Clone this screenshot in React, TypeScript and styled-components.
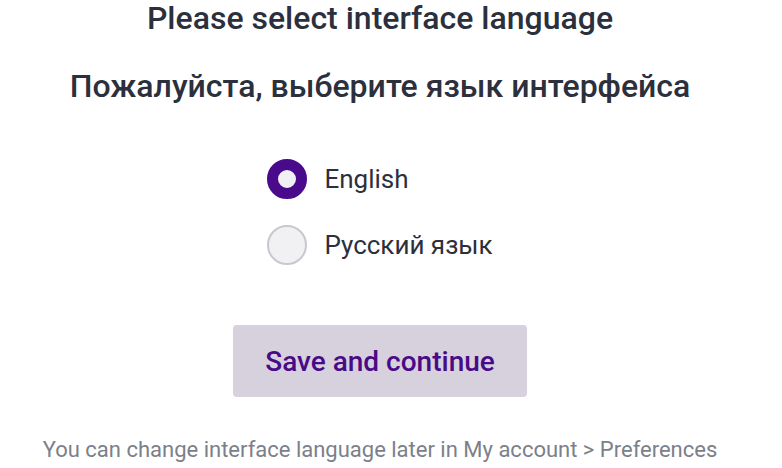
import React, { useState } from "react"
import styled, { createGlobalStyle } from "styled-components"

const GlobalStyle = createGlobalStyle`
    body {
        margin: 0;
        background: #ffffff;
        font-family: Roboto, "Noto Sans", Arial, sans-serif;
    }
`;

const Page = styled.div`
    width: 760px;
    display: flex;
    flex-direction: column;
    align-items: center;
`;

const Titulo = styled.h1<{ $separado?: boolean }>`
    margin: ${(p) => (p.$separado ? "32px 0 0" : "0")};
    font-size: 32px;
    font-weight: 500;
    line-height: 36px;
    color: #2c2f3c;
    text-align: center;
`;

const Lista = styled.div`
    display: flex;
    flex-direction: column;
    gap: 26px;
    margin-top: 55px;
`;

const Opcion = styled.label`
    display: flex;
    align-items: center;
    gap: 17px;
    font-size: 26px;
    color: #2c2f3c;
    cursor: pointer;
`;

const Circulo = styled.span<{ $activo: boolean }>`
    box-sizing: border-box;
    width: 40px;
    height: 40px;
    border-radius: 50%;
    background: #f1f1f4;
    border: ${(p) => (p.$activo ? "11.5px solid #4a0a8c" : "2px solid #c9c8cf")};
`;

const Boton = styled.button`
    margin-top: 60px;
    width: 294px;
    height: 72px;
    border: none;
    border-radius: 4px;
    background: #d6d1dd;
    color: #4a0a88;
    font-family: inherit;
    font-size: 28px;
    font-weight: 500;
    cursor: pointer;
`;

const Nota = styled.p`
    margin: 40px 0 0;
    font-size: 22px;
    line-height: 26px;
    color: #7b808a;
`;

const idiomas = ["English", "Русский язык"];

const App: React.FC = () => {
    const [idioma, setIdioma] = useState("English");

    return (
        <Page>
            <GlobalStyle />
            <Titulo>Please select interface language</Titulo>
            <Titulo $separado>Пожалуйста, выберите язык интерфейса</Titulo>
            <Lista>
                {idiomas.map((nombre) => (
                    <Opcion key={nombre} onClick={() => setIdioma(nombre)}>
                        <Circulo $activo={idioma === nombre} />
                        {nombre}
                    </Opcion>
                ))}
            </Lista>
            <Boton>Save and continue</Boton>
            <Nota>You can change interface language later in My account &gt; Preferences</Nota>
        </Page>
    )
}

export default App;
